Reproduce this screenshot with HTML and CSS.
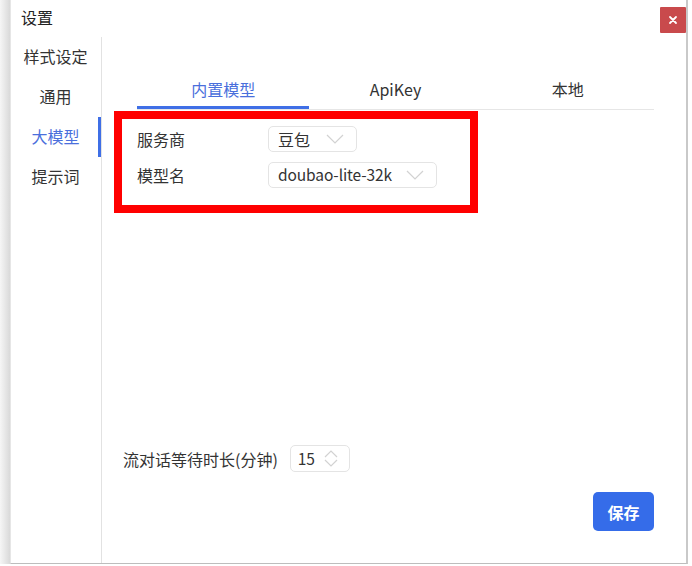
FILE: index.html
```html
<!DOCTYPE html>
<html lang="zh-CN">
<head>
<meta charset="utf-8">
<title>设置</title>
<link rel="stylesheet" href="styles.css">
</head>
<body>
<div class="screen">
  <div class="shadow"></div>
  <div class="window">
    <div class="titlebar">
      <span class="title">设置</span>
      <button class="close" aria-label="关闭">
        <svg width="10" height="10" viewBox="0 0 10 10"><path d="M2 2 L8 8 M8 2 L2 8" stroke="#fff" stroke-width="1.8" stroke-linecap="round"/></svg>
      </button>
    </div>
    <div class="body">
      <nav class="sidebar">
        <div class="nav-item">样式设定</div>
        <div class="nav-item">通用</div>
        <div class="nav-item active">大模型</div>
        <div class="nav-item">提示词</div>
      </nav>
      <main class="main">
        <div class="tabs">
          <div class="tab active">内置模型</div>
          <div class="tab">ApiKey</div>
          <div class="tab">本地</div>
        </div>
        <div class="form-box">
          <div class="row">
            <span class="label">服务商</span>
            <div class="select w1">
              <span class="value">豆包</span>
              <svg class="chev" width="18" height="10" viewBox="0 0 18 10"><path d="M1 1 L9 9 L17 1" fill="none" stroke="#d2d2d2" stroke-width="1.2"/></svg>
            </div>
          </div>
          <div class="row">
            <span class="label">模型名</span>
            <div class="select w2">
              <span class="value latin">doubao-lite-32k</span>
              <svg class="chev" width="18" height="10" viewBox="0 0 18 10"><path d="M1 1 L9 9 L17 1" fill="none" stroke="#d2d2d2" stroke-width="1.2"/></svg>
            </div>
          </div>
        </div>
        <div class="spacer"></div>
        <div class="wait-row">
          <span class="wait-label">流对话等待时长(分钟)</span>
          <div class="number">
            <span class="value latin">15</span>
            <svg class="spin" width="14" height="19" viewBox="0 0 14 19"><path d="M1 8 L7 2 L13 8 M1 11 L7 17 L13 11" fill="none" stroke="#d2d2d2" stroke-width="1.2"/></svg>
          </div>
        </div>
        <div class="actions">
          <button class="save">保存</button>
        </div>
      </main>
    </div>
  </div>
</div>
</body>
</html>
```
FILE: styles.css
```css
* { box-sizing: border-box; }
html, body {
  margin: 0;
  padding: 0;
  width: 692px;
  height: 566px;
  background: #ffffff;
  font-family: "Noto Sans CJK SC", "Noto Sans", sans-serif;
  color: #333333;
  overflow: hidden;
}
.screen {
  display: flex;
  width: 692px;
  height: 566px;
}
.shadow {
  width: 10px;
  height: 564px;
  background: linear-gradient(to right, #f6f6f6, #d9d9d9);
}
.window {
  width: 678px;
  height: 564px;
  background: #ffffff;
  border-left: 1px solid #e6e6e6;
  border-right: 2px solid #c9c9c9;
  border-bottom: 1px solid #bdbdbd;
  display: flex;
  flex-direction: column;
}
.titlebar {
  height: 37px;
  display: flex;
  align-items: flex-start;
  justify-content: space-between;
  padding: 6px 0 0 10px;
}
.title {
  font-size: 16px;
  line-height: 22px;
  color: #222;
}
.close {
  width: 26px;
  height: 26px;
  margin: 1px 0 0 0;
  border: none;
  border-radius: 1px;
  background: #c94a4c;
  display: flex;
  align-items: center;
  justify-content: center;
  padding: 0;
}
.body {
  flex: 1;
  display: flex;
}
.sidebar {
  width: 91px;
  border-right: 1px solid #e2e2e2;
  display: flex;
  flex-direction: column;
}
.nav-item {
  height: 40px;
  display: flex;
  align-items: center;
  justify-content: center;
  font-size: 16px;
  color: #333;
  padding: 0 1px 2px 0;
}
.nav-item.active {
  color: #4a6fdc;
  box-shadow: inset -3px 0 0 #3f6fe6;
}
.main {
  flex: 1;
  display: flex;
  flex-direction: column;
  padding: 34px 32px 32px 12px;
}
.tabs {
  display: flex;
  margin-left: 23px;
  border-bottom: 1px solid #e6e6e6;
}
.tab {
  flex: 1;
  height: 38px;
  display: flex;
  align-items: center;
  justify-content: center;
  font-size: 16px;
  color: #333;
  padding-bottom: 2px;
}
.tab.active {
  color: #4a6fdc;
  box-shadow: inset 0 -3px 0 #3f6fe6;
}
.form-box {
  width: 364px;
  margin-top: 1px;
  border: 8px solid #ff0000;
  padding: 7px 0 17px 15px;
  display: flex;
  flex-direction: column;
  gap: 10px;
}
.row {
  display: flex;
  align-items: center;
  height: 26px;
}
.label {
  width: 131px;
  font-size: 16px;
  color: #333;
}
.select {
  height: 26px;
  border: 1px solid #e4e4e4;
  border-radius: 5px;
  display: flex;
  align-items: center;
  justify-content: space-between;
  padding: 0 12px 0 9px;
  font-size: 16px;
  color: #333;
}
.select.w1 { width: 89px; }
.select.w2 { width: 169px; }
.value { line-height: 1; }
.latin { font-size: 15.5px; letter-spacing: -0.1px; }
.chev { display: block; }
.spacer { flex: 1; }
.wait-row {
  display: flex;
  align-items: center;
  gap: 12px;
  margin-left: 9px;
}
.wait-label {
  font-size: 16px;
  color: #333;
}
.number {
  width: 60px;
  height: 27px;
  border: 1px solid #e4e4e4;
  border-radius: 5px;
  display: flex;
  align-items: center;
  justify-content: space-between;
  padding: 0 11px 0 7px;
  font-size: 16px;
  color: #333;
}
.spin { display: block; }
.actions {
  display: flex;
  justify-content: flex-end;
  margin-top: 20px;
}
.save {
  width: 61px;
  height: 39px;
  border: none;
  border-radius: 5px;
  background: #356ce9;
  color: #ffffff;
  font-family: "Noto Sans CJK SC", sans-serif;
  font-size: 16px;
  font-weight: 700;
  padding: 0;
}
```
